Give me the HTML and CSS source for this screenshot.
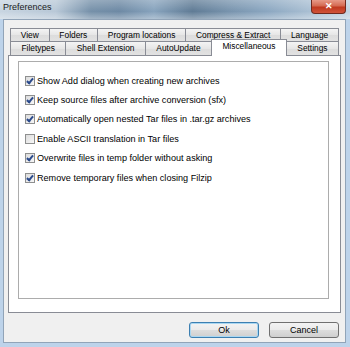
FILE: index.html
```html
<!DOCTYPE html>
<html lang="en">
<head>
    <meta charset="UTF-8">
    <title>Preferences</title>
    <link rel="stylesheet" href="styles.css">
</head>
<body>
    <div class="window">
        <div class="titlebar">
            <span class="title">Preferences</span>
            <span class="close">&#x2715;</span>
        </div>

        <div class="client">
            <div class="tabcontrol">
                <div class="tabrow">
                    <span class="tab">View</span>
                    <span class="tab">Folders</span>
                    <span class="tab">Program locations</span>
                    <span class="tab">Compress &amp; Extract</span>
                    <span class="tab">Language</span>
                </div>
                <div class="tabrow">
                    <span class="tab">Filetypes</span>
                    <span class="tab">Shell Extension</span>
                    <span class="tab">AutoUpdate</span>
                    <span class="tab active">Miscellaneous</span>
                    <span class="tab">Settings</span>
                </div>

                <div class="panel">
                    <div class="group">
                        <label class="option"><span class="box checked"></span>Show Add dialog when creating new archives</label>
                        <label class="option"><span class="box checked"></span>Keep source files after archive conversion (sfx)</label>
                        <label class="option"><span class="box checked"></span>Automatically open nested Tar files in .tar.gz archives</label>
                        <label class="option"><span class="box"></span>Enable ASCII translation in Tar files</label>
                        <label class="option"><span class="box checked"></span>Overwrite files in temp folder without asking</label>
                        <label class="option"><span class="box checked"></span>Remove temporary files when closing Filzip</label>
                    </div>
                </div>
            </div>

            <div class="buttons">
                <span class="button default">Ok</span>
                <span class="button">Cancel</span>
            </div>
        </div>
    </div>
</body>
</html>
```

FILE: styles.css
```css
body {
    margin: 0;
    padding: 0;
    font-family: "Liberation Sans", Arial, sans-serif;
    color: #000;
}

.window {
    width: 350px;
    height: 347px;
    display: flex;
    flex-direction: column;
    background-color: #bdd3ea;
    box-sizing: border-box;
}

.titlebar {
    height: 19px;
    display: flex;
    justify-content: space-between;
    align-items: flex-start;
    background:
        linear-gradient(rgba(255,255,255,0.25), rgba(255,255,255,0) 60%, rgba(255,255,255,0.35)),
        linear-gradient(90deg, #c8d5e1 0%, #b8c8d7 16%, #7590a9 26%, #6d89a4 34%, #87a3bd 44%, #5f7b95 55%, #7894ae 66%, #8aa6c0 76%, #a8bed2 88%, #c3d3e2 100%);
}

.title {
    font-size: 9px;
    line-height: 15px;
    padding-left: 3px;
    color: #1b1b1b;
}

.close {
    width: 35px;
    height: 14px;
    margin-right: 4px;
    box-sizing: border-box;
    border: 1px solid #6f2a1f;
    border-top: 0;
    border-radius: 0 0 4px 4px;
    background: linear-gradient(#e79a88 0%, #d46a52 45%, #c0391f 55%, #d0533a 100%);
    color: #fff;
    font-size: 9px;
    font-weight: bold;
    line-height: 13px;
    text-align: center;
}

.client {
    flex: 1;
    margin: 0 4px 4px 3px;
    border: 1px solid #91a4b8;
    background-color: #f0f0f0;
    padding: 8px 4px 3px 4px;
    display: flex;
    flex-direction: column;
}

.tabcontrol {
    height: 285px;
    display: flex;
    flex-direction: column;
}

.tabrow {
    display: flex;
    margin: 0 2px;
}

.tab {
    flex: 1 1 auto;
    height: 13px;
    box-sizing: border-box;
    margin-right: -1px;
    border: 1px solid #898c95;
    border-bottom: 0;
    background: linear-gradient(#f4f4f4, #e6e6e6 50%, #dcdcdc 51%, #e2e2e2);
    font-size: 8.4px;
    line-height: 12px;
    text-align: center;
    white-space: nowrap;
}

.tabrow + .tabrow .tab {
    height: 14px;
    line-height: 13px;
}

.tab:last-child {
    margin-right: 0;
}

.tabrow + .tabrow .tab.active {
    position: relative;
    z-index: 1;
    height: 17px;
    margin-top: -2px;
    margin-bottom: -1px;
    background: #fff;
    line-height: 13px;
}

.panel {
    flex: 1;
    background-color: #fff;
    border: 1px solid #898c95;
    padding: 5px 11px 13px 9px;
    display: flex;
    flex-direction: column;
}

.group {
    flex: 1;
    border: 1px solid #acacac;
    padding: 9px 6px 0 6px;
    display: flex;
    flex-direction: column;
}

.option {
    height: 19.4px;
    display: flex;
    align-items: center;
    font-size: 9.1px;
    white-space: nowrap;
}

.box {
    width: 10px;
    height: 10px;
    box-sizing: border-box;
    margin-right: 2px;
    border: 1px solid #8e8f8f;
    background: linear-gradient(135deg, #dcdcdc, #f7f7f7);
    position: relative;
}

.box.checked::after {
    content: "";
    position: absolute;
    left: 2px;
    top: 0px;
    width: 2px;
    height: 5px;
    border: solid #2a4a8c;
    border-width: 0 2px 2px 0;
    transform: rotate(40deg);
}

.buttons {
    display: flex;
    justify-content: flex-end;
    gap: 10px;
    margin-top: 9px;
    padding-right: 2px;
}

.button {
    width: 70px;
    height: 16px;
    box-sizing: border-box;
    border: 1px solid #707070;
    border-radius: 3px;
    background: linear-gradient(#f3f3f3 0%, #ebebeb 48%, #dddddd 52%, #cfcfcf 100%);
    font-size: 9px;
    line-height: 14px;
    text-align: center;
}

.button.default {
    border-color: #3c7fb1;
    box-shadow: inset 0 0 0 1px #a9d7f2;
}
```
